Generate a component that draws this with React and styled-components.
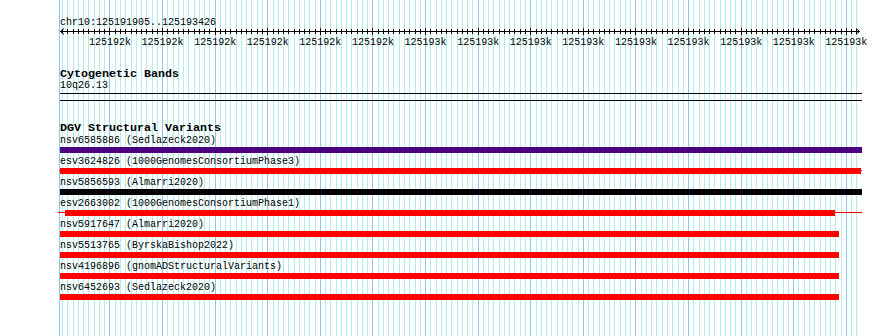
import React from 'react'
import styled, { createGlobalStyle } from 'styled-components';

const START = 125191905;
const END = 125193426;
const VIEW_LEFT = 60;
const VIEW_WIDTH = 800;
const SCALE = VIEW_WIDTH / (END - START);

const toPx = (bp) => (bp - START) * SCALE;

const GlobalStyle = createGlobalStyle`
    html, body {
        margin: 0;
        padding: 0;
        background: #ffffff;
    }
`;

const Page = styled.div`
    position: relative;
    width: 890px;
    height: 336px;
    overflow: hidden;
    background: #ffffff;
    font-family: "Liberation Mono", "DejaVu Sans Mono", monospace;
    color: #000;
`;

const GridLayer = styled.svg`
    position: absolute;
    top: 0;
    left: 0;
    z-index: 0;
`;

const Tracks = styled.div`
    position: relative;
    z-index: 1;
    box-sizing: border-box;
    width: 862px;
    padding-left: ${VIEW_LEFT}px;
`;

const LocationLabel = styled.div`
    padding-top: 17px;
    font-size: 10px;
    line-height: 11px;
    height: 11px;
    white-space: nowrap;
`;

const RulerWrapper = styled.div`
    position: relative;
    height: 20px;
    width: 802px;
`;

const RulerSvg = styled.svg`
    position: absolute;
    top: 0;
    left: 0;
`;

const RulerLabel = styled.div`
    position: absolute;
    top: 9px;
    width: 42px;
    margin-left: -21px;
    text-align: center;
    font-size: 10px;
    line-height: 11px;
    white-space: nowrap;
`;

const TrackTitle = styled.div`
    margin-top: ${props => props.gap}px;
    font-size: 11.67px;
    font-weight: bold;
    line-height: 14px;
    height: 13px;
    white-space: nowrap;
`;

const BandLabel = styled.div`
    font-size: 10px;
    line-height: 12px;
    height: 12px;
    margin-bottom: 1px;
`;

const BandTrack = styled.div`
    width: 802px;
    height: 6px;
    border-top: 1px solid #000;
    border-bottom: 1px solid #000;
`;

const FeatureRow = styled.div`
    margin-bottom: 2px;
`;

const FeatureLabel = styled.div`
    font-size: 10px;
    line-height: 13px;
    height: 13px;
    white-space: nowrap;
`;

const FeatureLane = styled.div`
    position: relative;
    width: 802px;
    height: 6px;
`;

const FeatureBody = styled.div`
    position: absolute;
    top: 0;
    height: 6px;
    background: ${props => props.color};
`;

const FeatureLine = styled.div`
    position: absolute;
    top: 2px;
    height: 1px;
    background: ${props => props.color};
`;

const features = [
    { name: 'nsv6585886', study: 'Sedlazeck2020', color: '#4b0082', start: 0, end: 802 },
    { name: 'esv3624826', study: '1000GenomesConsortiumPhase3', color: '#ff0000', start: 0, end: 801, line: [-1, 802] },
    { name: 'nsv5856593', study: 'Almarri2020', color: '#000000', start: 0, end: 802 },
    { name: 'esv2663002', study: '1000GenomesConsortiumPhase1', color: '#ff0000', start: 5, end: 775, line: [-2, 802] },
    { name: 'nsv5917647', study: 'Almarri2020', color: '#ff0000', start: 0, end: 779 },
    { name: 'nsv5513765', study: 'ByrskaBishop2022', color: '#ff0000', start: 0, end: 779 },
    { name: 'nsv4196896', study: 'gnomADStructuralVariants', color: '#ff0000', start: 0, end: 779 },
    { name: 'nsv6452693', study: 'Sedlazeck2020', color: '#ff0000', start: 0, end: 779 },
];

const gridStops = () => {
    const stops = [];
    for (let bp = Math.ceil(START / 10) * 10; bp <= END; bp += 10) {
        stops.push({ bp, major: bp % 100 === 0 });
    }
    return stops;
};

const Grid = () => (
    <GridLayer width="890" height="336" shapeRendering="crispEdges">
        <line x1="59.5" y1="0" x2="59.5" y2="336" stroke="#8cc8ec" strokeWidth="1" />
        {
            gridStops().map(({ bp, major }) => {
                const x = Math.floor(VIEW_LEFT + toPx(bp)) + 0.5;
                return (
                    <line
                        key={bp}
                        x1={x} y1="0" x2={x} y2="336"
                        stroke={major ? '#8cc8ec' : '#aeeeee'}
                        strokeWidth="1"
                    />
                )
            })
        }
    </GridLayer>
);

const Ruler = () => {
    const stops = gridStops();
    const majors = stops.filter(s => s.major);
    return (
        <RulerWrapper>
            <RulerSvg width="802" height="20" shapeRendering="crispEdges">
                <line x1="0" y1="3.5" x2="800" y2="3.5" stroke="#000" />
                <polyline points="4,0.5 0.5,3.5 4,6.5" fill="none" stroke="#000" shapeRendering="auto" />
                <polyline points="796,0.5 799.5,3.5 796,6.5" fill="none" stroke="#000" shapeRendering="auto" />
                {
                    stops.map(({ bp, major }) => {
                        const x = Math.floor(toPx(bp)) + 0.5;
                        return (
                            <line key={bp} x1={x} y1={major ? 0 : 1} x2={x} y2={major ? 7 : 6} stroke="#000" />
                        )
                    })
                }
            </RulerSvg>
            {
                majors.map(({ bp }, i) => (
                    <RulerLabel key={bp} style={{ left: toPx(bp) }}>
                        {i < 6 ? '125192k' : '125193k'}
                    </RulerLabel>
                ))
            }
        </RulerWrapper>
    )
};

const App = () => {
    return (
        <Page>
            <GlobalStyle />
            <Grid />
            <Tracks>
                <LocationLabel>chr10:125191905..125193426</LocationLabel>
                <Ruler />

                <TrackTitle gap={19}>Cytogenetic Bands</TrackTitle>
                <BandLabel>10q26.13</BandLabel>
                <BandTrack />

                <TrackTitle gap={20}>DGV Structural Variants</TrackTitle>
                {
                    features.map(feature => (
                        <FeatureRow key={feature.name}>
                            <FeatureLabel>{feature.name} ({feature.study})</FeatureLabel>
                            <FeatureLane>
                                {
                                    feature.line ? (
                                        <FeatureLine
                                            color={feature.color}
                                            style={{ left: feature.line[0], width: feature.line[1] - feature.line[0] }}
                                        />
                                    ) : null
                                }
                                <FeatureBody
                                    color={feature.color}
                                    style={{ left: feature.start, width: feature.end - feature.start }}
                                />
                            </FeatureLane>
                        </FeatureRow>
                    ))
                }
            </Tracks>
        </Page>
    )
}

export default App
